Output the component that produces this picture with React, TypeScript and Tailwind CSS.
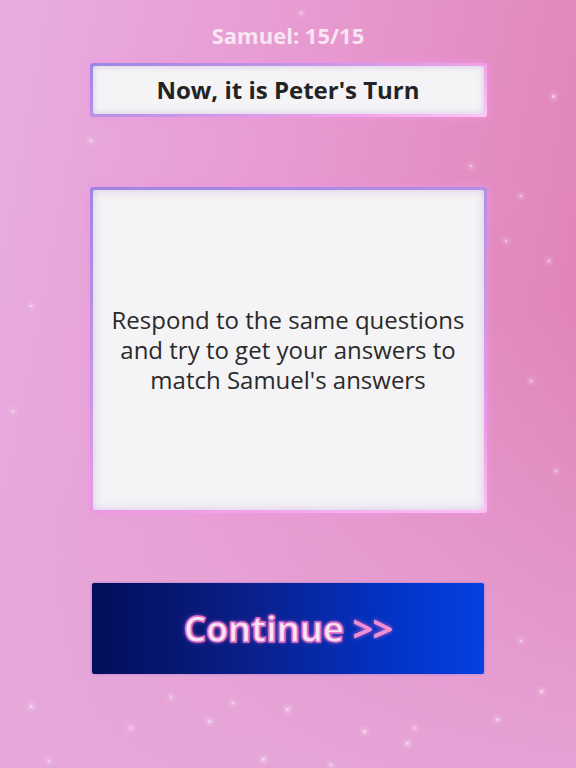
import React from 'react';

const stars: [number, number, number][] = [
  [552, 95, 3], [520, 195, 2], [470, 165, 2], [505, 240, 2], [548, 260, 2],
  [530, 380, 2], [555, 470, 2], [30, 305, 2], [12, 410, 2], [520, 640, 2],
  [540, 690, 3], [30, 705, 3], [130, 727, 2], [170, 696, 2], [208, 720, 3],
  [232, 702, 2], [286, 708, 3], [363, 730, 3], [406, 742, 3], [414, 727, 2],
  [496, 718, 3], [262, 758, 3], [330, 764, 2], [48, 760, 2], [176, 670, 2],
  [210, 222, 2], [90, 140, 2], [300, 12, 2],
];

export default function App() {
  return (
    <div
      className="relative w-[576px] h-[768px] overflow-hidden bg-[linear-gradient(100deg,#e8aee0_0%,#e79ad0_45%,#e07fb2_100%)]"
      style={{ fontFamily: '"Open Sans", "Noto Sans", sans-serif' }}
    >
      {/* bottom fade towards lavender */}
      <div className="absolute inset-0 bg-[linear-gradient(180deg,rgba(230,166,216,0)_0%,rgba(230,166,216,0)_40%,rgba(230,168,218,0.85)_100%)]" />
      {stars.map(([x, y, s], i) => (
        <div
          key={i}
          className="absolute rounded-full bg-white/60 shadow-[0_0_4px_2px_rgba(255,255,255,0.35)]"
          style={{ left: x, top: y, width: s, height: s }}
        />
      ))}

      <div className="relative flex flex-col items-center pt-[19px]">
        <div className="text-[22px] font-bold leading-[32px] text-white/75">Samuel: 15/15</div>

        {/* turn banner */}
        <div className="mt-[12px] w-[397px] h-[54px] rounded-[3px] p-[3px] bg-[linear-gradient(160deg,#9a86e4_0%,#c496e6_40%,#f3a2ea_75%,#fdc8f6_100%)] shadow-[0_0_6px_2px_rgba(240,150,230,0.6)]">
          <div className="flex h-full items-center justify-center rounded-[2px] bg-[#f4f3f5] shadow-[inset_0_0_6px_rgba(190,150,220,0.5)]">
            <span className="text-[24px] font-bold text-[#232323]">Now, it is Peter's Turn</span>
          </div>
        </div>

        {/* instruction box */}
        <div className="mt-[70px] w-[397px] h-[326px] rounded-[3px] p-[3px] bg-[linear-gradient(165deg,#9c86e2_0%,#c596e4_45%,#ee9be6_80%,#fcc0f4_100%)] shadow-[0_0_6px_2px_rgba(240,150,230,0.6)]">
          <div className="flex h-full items-center justify-center rounded-[2px] bg-[#f4f3f5] px-2 shadow-[inset_0_0_8px_rgba(190,150,220,0.5)]">
            <p className="text-center text-[24px] leading-[30px] text-[#2a2a2a]">
              Respond to the same questions
              <br />
              and try to get your answers to
              <br />
              match Samuel's answers
            </p>
          </div>
        </div>

        {/* continue button */}
        <button className="mt-[70px] flex w-[392px] h-[91px] items-center justify-center rounded-[2px] bg-[linear-gradient(90deg,#020e58_0%,#0a1f8a_40%,#0332c4_75%,#0440e2_100%)] shadow-[0_0_3px_rgba(120,100,200,0.6)]">
          <span
            className="text-[36px] font-bold text-[#fbe4f6] [-webkit-text-stroke:1.5px_#e070c8] [text-shadow:0_0_4px_rgba(240,110,210,0.9)] tracking-[-0.5px]"
          >
            Continue <span className="text-[#f28fd2] [-webkit-text-stroke:0px]">&gt;&gt;</span>
          </span>
        </button>
      </div>
    </div>
  );
}
